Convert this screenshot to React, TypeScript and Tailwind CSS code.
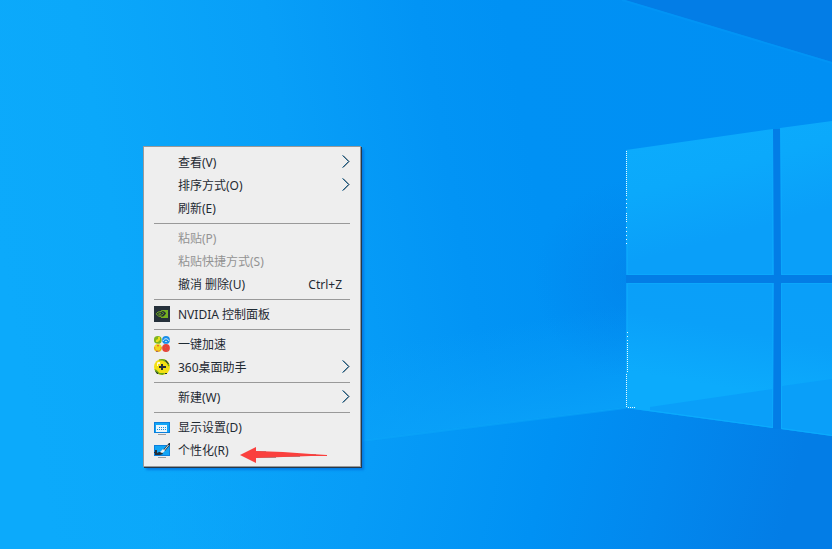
import type { ReactNode } from "react";

type Item = {
  label: string;
  icon?: ReactNode;
  shortcut?: string;
  submenu?: boolean;
  disabled?: boolean;
};

const NvidiaIcon = () => (
  <svg viewBox="0 0 16 16" className="size-4" aria-hidden="true">
    <path fill="#25303a" d="M0 0h16v16H0z" />
    <path fill="#76b020" d="M7 4h7v8H7z" />
    <path fill="#25303a" d="M6 5c3-.5 5 .5 6 2.500C10.500 10 9 11 6 11z" />
    <path
      fill="none"
      stroke="#76b020"
      d="M7 5.500C4.500 5.500 3 6.500 2.300 7.800 3.500 9.800 5 10.700 7.500 10.700M7 7.300c-1-.2-2 0-2.500.6C5.200 9 6.200 9.500 7.500 9c1-.3 1.700-1 2-1.500-.7-1.200-1.500-2-2.500-2"
    />
  </svg>
);

const BoostIcon = () => (
  <svg viewBox="0 0 16 16" className="size-4" aria-hidden="true">
    <circle cx="3.800" cy="3.900" r="3.900" fill="#80b51c" />
    <path fill="#e8df19" d="M4 1h2v3L4 6H2V4l2-1z" />
    <circle cx="12" cy="3.900" r="3.900" fill="#178ee8" />
    <path fill="none" stroke="#d9f0ff" d="M9 5c1-3 5-3 6 0M11 6c.5-1 1.500-1 2 0" />
    <circle cx="3.900" cy="12" r="3.900" fill="#f1d81c" />
    <path fill="none" stroke="#e78a25" d="M.7 11v2l2 2h2.500l2-2v-2" />
    <path fill="#e84338" d="M3 9h2l-1 2z" />
    <circle cx="12" cy="12" r="3.900" fill="#e84338" />
    <path fill="#a96b66" d="M9 9h1v1H9zM13 14h1v1h-1zM11 11h1v1h-1zM2 15h2v1H2z" />
  </svg>
);

const AssistantIcon = () => (
  <svg viewBox="0 0 16 16" className="size-4" aria-hidden="true">
    <circle cx="8" cy="8" r="8" fill="#f3df13" />
    <path fill="#69a51c" d="M5 .5L8 0l3 .5 3 3 1.500 3-1 1-2-4-4-2H5zM.5 10l2 1 3 3h6l-3 2-4-1-3-2z" />
    <path fill="#28352a" d="M11 1h1l3 4h-1l-2-2zM1 12l3 2v1H3zM11 14h2v1h-2z" />
    <path fill="#fffbd2" d="M4 3h2v2H4v2H3V4z" />
    <path fill="#25303a" d="M7 5h2v2h3v2H9v2H7V9H5V7h2z" />
  </svg>
);

const DisplayIcon = () => (
  <svg viewBox="0 0 16 16" className="size-4" aria-hidden="true">
    <path fill="#0b7fdc" d="M0 3h16v11H0z" />
    <path fill="#12a5f5" d="M1 4h14v9H1z" />
    <path fill="#e9f6fc" d="M2 6h11v7H2z" />
    <path
      fill="#168ee0"
      d="M5 8h1v1H5zM7 8h1v1H7zM9 8h1v1H9zM11 8h1v1h-1zM3 10h1v1H3zM5 10h1v1H5zM7 10h1v1H7zM9 10h1v1H9zM11 10h1v1h-1z"
    />
    <path fill="#9b9da0" d="M4 15h8v1H4z" />
  </svg>
);

const PersonalizeIcon = () => (
  <svg viewBox="0 0 16 16" className="size-4" aria-hidden="true">
    <path fill="#0b7fdc" d="M0 3h16v11H0z" />
    <path fill="#12a5f5" d="M1 4h14v9H1z" />
    <path fill="#25303a" d="M15 1h1v2l-5 6-2-1zM1 8h2v3l2-1h3l1 2-3 1H1v-2H0v-1h1z" />
    <path fill="#e9f0f3" d="M14 3h1l-4 5-1 2-2 1-2-1 3-3 1 1z" />
    <path fill="#9b9da0" d="M4 15h8v1H4z" />
  </svg>
);

const groups: Item[][] = [
  [
    { label: "查看(V)", submenu: true },
    { label: "排序方式(O)", submenu: true },
    { label: "刷新(E)" },
  ],
  [
    { label: "粘贴(P)", disabled: true },
    { label: "粘贴快捷方式(S)", disabled: true },
    { label: "撤消 删除(U)", shortcut: "Ctrl+Z" },
  ],
  [{ label: "NVIDIA 控制面板", icon: <NvidiaIcon /> }],
  [
    { label: "一键加速", icon: <BoostIcon /> },
    { label: "360桌面助手", icon: <AssistantIcon />, submenu: true },
  ],
  [{ label: "新建(W)", submenu: true }],
  [
    { label: "显示设置(D)", icon: <DisplayIcon /> },
    { label: "个性化(R)", icon: <PersonalizeIcon /> },
  ],
];

const Chevron = () => (
  <svg viewBox="0 0 8 14" className="mb-px h-3.5 w-2" fill="none" aria-hidden="true">
    <path d="M.5 .5l6 6-6 6" stroke="#168bd0" />
    <path d="M1 .5l6 6-6 6" stroke="#20303c" />
  </svg>
);

const MenuItem = ({ label, icon, shortcut, submenu, disabled }: Item) => (
  <button
    type="button"
    disabled={disabled}
    className="flex h-[23px] w-full items-center px-2.5 text-left text-xs text-[#1f2a33] enabled:hover:bg-white disabled:text-[#939393]"
  >
    <span className="mr-2 mb-px size-4 shrink-0">{icon}</span>
    <span className="flex-1 whitespace-nowrap">{label}</span>
    {shortcut && <span className="mr-2">{shortcut}</span>}
    {submenu && <Chevron />}
  </button>
);

const ContextMenu = () => (
  <div className="absolute top-[146px] left-[143px] w-[218px] border border-[#999] bg-[#eee] py-1 shadow-[1px_1px_0_#26394a,3px_3px_2px_rgba(3,110,220,0.7)]">
    {groups.map((group, i) => (
      <div key={i}>
        {i > 0 && <hr className="mx-2.5 my-[3px] border-[#999]" />}
        {group.map((item) => (
          <MenuItem key={item.label} {...item} />
        ))}
      </div>
    ))}
    <svg
      viewBox="0 0 88 16"
      className="pointer-events-none absolute bottom-[3px] left-24 h-4 w-[88px]"
      aria-hidden="true"
    >
      <path fill="#999" d="M16 4h10v1h14v1h18v1h18v1h11v1H60v1H36v1H16z" />
      <path fill="#fa403e" d="M0 8L16 0v4l27 1 28 2 16 1v1H71l-28 1-27 1v5z" />
    </svg>
  </div>
);

const Wallpaper = () => (
  <svg
    viewBox="0 0 832 549"
    preserveAspectRatio="xMidYMid slice"
    className="absolute inset-0 h-full w-full"
    aria-hidden="true"
  >
    <defs>
      <linearGradient id="sky" gradientUnits="userSpaceOnUse" x1="0" y1="260" x2="832" y2="110">
        <stop offset="0" stopColor="#0caafb" />
        <stop offset=".14" stopColor="#0ba8fa" />
        <stop offset=".36" stopColor="#089ff8" />
        <stop offset=".54" stopColor="#0294f5" />
        <stop offset=".64" stopColor="#0091f4" />
        <stop offset="1" stopColor="#008ff3" />
      </linearGradient>
      <linearGradient id="floor" gradientUnits="userSpaceOnUse" x1="150" y1="400" x2="780" y2="549">
        <stop offset="0" stopColor="#0ba8fa" stopOpacity="0" />
        <stop offset=".35" stopColor="#079cf7" />
        <stop offset=".62" stopColor="#0091f4" />
        <stop offset=".8" stopColor="#0288ee" />
        <stop offset="1" stopColor="#037de6" />
      </linearGradient>
      <linearGradient id="beam" gradientUnits="userSpaceOnUse" x1="470" y1="330" x2="486" y2="426">
        <stop offset="0" stopColor="#0aa1f9" stopOpacity="0" />
        <stop offset="1" stopColor="#0aa2f9" stopOpacity=".8" />
      </linearGradient>
      <radialGradient id="shade" gradientUnits="userSpaceOnUse" cx="634" cy="279" r="100">
        <stop offset="0" stopColor="#037de6" stopOpacity=".5" />
        <stop offset="1" stopColor="#037de6" stopOpacity="0" />
      </radialGradient>
      <linearGradient id="upper" gradientUnits="userSpaceOnUse" x1="690" y1="130" x2="730" y2="275">
        <stop offset="0" stopColor="#0cabfc" />
        <stop offset=".3" stopColor="#0ba9fb" />
        <stop offset=".75" stopColor="#0a9ff9" />
      </linearGradient>
      <linearGradient id="lower" gradientUnits="userSpaceOnUse" x1="710" y1="283" x2="690" y2="400">
        <stop offset="0" stopColor="#0a9ff9" />
        <stop offset=".35" stopColor="#0aa0f9" />
        <stop offset=".85" stopColor="#0cabfc" />
      </linearGradient>
    </defs>
    <path fill="url(#sky)" d="M0 0h832v549H0z" />
    <path fill="url(#beam)" d="M260 340l366-50v118l-366 45z" />
    <path fill="url(#floor)" d="M150 467l476-59 206 28v113H150z" />
    <path fill="#037de6" d="M624 0h208v62z" />
    <path stroke="#0294f5" strokeWidth="2" d="M622 0l210 63" />
    <path fill="url(#shade)" d="M534 170h92v215h-92z" />
    <path fill="#037de6" d="M626 275h206v8H626zM773 129h8v300h-8z" />
    <path fill="url(#upper)" d="M626 150l147-21 1 146H626zM780 128l52-7v154h-51z" />
    <path fill="url(#lower)" d="M626 283h148l-1 145-147-20zM781 283h51v153l-51-7z" />
    <path fill="#0a9ff9" d="M650 407l123-18v38l-123-17zM782 386l50-7v56l-50-7z" />
    <path
      fill="none"
      stroke="#0cabfc"
      strokeOpacity=".7"
      d="M627.500 150v124.500h145V129M781.500 128v146.500H832M627.500 408V283.500h145V428M781.500 429V283.500H832M626 407.500l147 20M781 428.500l51 7"
    />
    <path fill="none" stroke="#0ba8fa" strokeOpacity=".5" strokeWidth="2" d="M361 441l265-33" />
    <path
      fill="none"
      stroke="#e8f8ff"
      strokeDasharray="1 1"
      d="M626.500 151v43M626.500 213v10M627.500 343v30M626.500 374v33M628 407.500h7"
    />
    <path fill="none" stroke="#e8f8ff" strokeDasharray="1 3" d="M626.500 195v16M626.500 227v20M627.500 332v11" />
  </svg>
);

const App = () => {
  return (
    <main className="relative min-h-screen overflow-hidden bg-[#0a9ff9] font-['Noto_Sans','Noto_Sans_CJK_SC',sans-serif]">
      <Wallpaper />
      <ContextMenu />
    </main>
  );
};

export default App;
